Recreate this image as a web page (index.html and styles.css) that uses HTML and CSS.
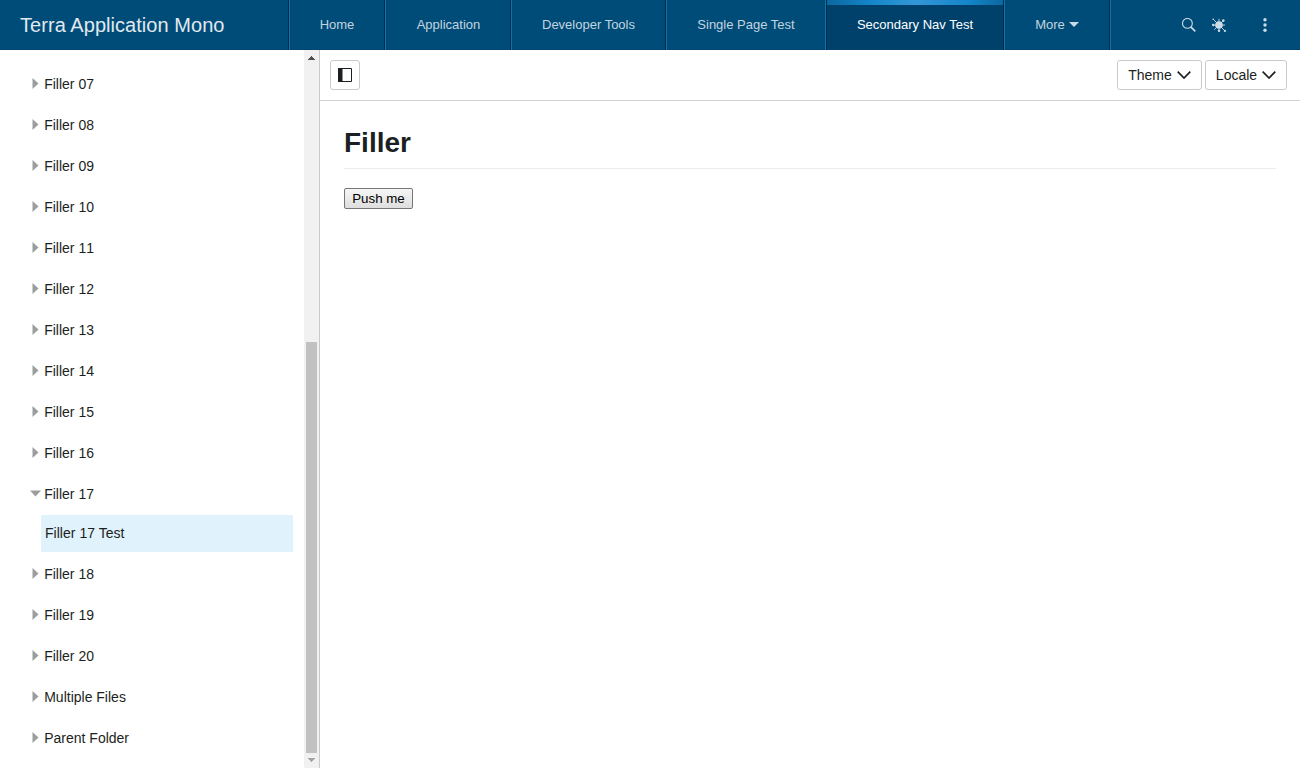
FILE: index.html
```html
<!DOCTYPE html>
<html lang="en">
<head>
<meta charset="utf-8">
<title>Terra Application Mono</title>
<link rel="stylesheet" href="styles.css">
</head>
<body>
<header class="header">
  <div class="brand">Terra Application Mono</div>
  <nav class="tabs">
    <a class="tab home">Home</a>
    <a class="tab application">Application</a>
    <a class="tab developer">Developer Tools</a>
    <a class="tab single">Single Page Test</a>
    <a class="tab active">Secondary Nav Test</a>
    <a class="tab more">More<svg width="10" height="5" viewBox="0 0 10 5"><path d="M0 0h10L5 5z"/></svg></a>
  </nav>
  <div class="utilities">
    <svg class="search" width="14" height="14" viewBox="0 0 14 14"><circle cx="5.4" cy="5.4" r="4.9" fill="none" stroke="currentColor" stroke-width="1.1"/><path d="M8.8 8.8l4.5 4.5" stroke="currentColor" stroke-width="1.7"/></svg>
    <svg class="bug" width="14" height="14" viewBox="0 0 14 14"><circle cx="7" cy="7" r="3.8" fill="currentColor"/><path d="M7 .8v12.5M.8 7H13M1 1l12 12M11.5 2.5L2.3 11.7" stroke="currentColor" stroke-width=".9"/><g fill="currentColor"><circle cx="1.2" cy="7" r="1.2"/><circle cx="11.3" cy="2.6" r="1.3"/><circle cx="1.2" cy="1.2" r=".8"/><circle cx="12.9" cy="12.9" r="1.1"/><circle cx="7" cy="12.8" r="1.2"/></g></svg>
    <svg class="dots" width="4" height="14" viewBox="0 0 4 14" fill="currentColor"><circle cx="2" cy="1.8" r="1.7"/><circle cx="2" cy="7" r="1.7"/><circle cx="2" cy="12.2" r="1.7"/></svg>
  </div>
</header>
<div class="body">
  <aside class="sidebar">
    <ul class="menu">
      <li class="item"><i class="arrow"></i>Filler 07</li>
      <li class="item"><i class="arrow"></i>Filler 08</li>
      <li class="item"><i class="arrow"></i>Filler 09</li>
      <li class="item"><i class="arrow"></i>Filler 10</li>
      <li class="item"><i class="arrow"></i>Filler 11</li>
      <li class="item"><i class="arrow"></i>Filler 12</li>
      <li class="item"><i class="arrow"></i>Filler 13</li>
      <li class="item"><i class="arrow"></i>Filler 14</li>
      <li class="item"><i class="arrow"></i>Filler 15</li>
      <li class="item"><i class="arrow"></i>Filler 16</li>
      <li class="item"><i class="arrow open"></i>Filler 17</li>
      <li class="child">Filler 17 Test</li>
      <li class="item"><i class="arrow"></i>Filler 18</li>
      <li class="item"><i class="arrow"></i>Filler 19</li>
      <li class="item"><i class="arrow"></i>Filler 20</li>
      <li class="item"><i class="arrow"></i>Multiple Files</li>
      <li class="item"><i class="arrow"></i>Parent Folder</li>
    </ul>
    <div class="scrollbar">
      <svg width="7" height="4" viewBox="0 0 7 4" fill="#505050" shape-rendering="crispEdges"><path d="M3 0h1v1h1v1h1v1h1v1H0V3h1V2h1V1h1z"/></svg>
      <div class="thumb"></div>
      <svg width="7" height="4" viewBox="0 0 7 4" fill="#a3a3a3" shape-rendering="crispEdges"><path d="M0 0h7v1H6v1H5v1H4v1H3V3H2V2H1V1H0z"/></svg>
    </div>
  </aside>
  <main class="main">
    <div class="toolbar">
      <button class="btn toggle"><svg width="14" height="14" viewBox="0 0 14 14"><path d="M0 0h4.5v14H0z" fill="#1c1f21"/><path d="M4 .5h9.5v13H4" fill="none" stroke="#1c1f21"/></svg></button>
      <button class="btn theme">Theme<svg width="14" height="8" viewBox="0 0 14 8"><path d="M.7.7L7 7 13.3.7" fill="none" stroke="#1c1f21" stroke-width="1.7"/></svg></button>
      <button class="btn locale">Locale<svg width="14" height="8" viewBox="0 0 14 8"><path d="M.7.7L7 7 13.3.7" fill="none" stroke="#1c1f21" stroke-width="1.7"/></svg></button>
    </div>
    <section class="content">
      <h1>Filler</h1>
      <button class="push">Push me</button>
    </section>
  </main>
</div>
</body>
</html>
```
FILE: styles.css
```css
* { box-sizing: border-box; }
body {
  margin: 0;
  height: 768px;
  overflow: hidden;
  display: flex;
  flex-direction: column;
  font: 14px "Liberation Sans", Arial, sans-serif;
  color: #1c1f21;
  background: #fff;
}
svg { display: block; flex: none; }
.header {
  flex: none;
  height: 50px;
  display: flex;
  background: #004c79;
  box-shadow: inset 0 -1px #00446f;
  color: #ccdbe5;
}
.brand {
  width: 288px;
  padding-left: 20px;
  font-size: 20px;
  line-height: 50px;
  letter-spacing: .05px;
  color: #e0e9ef;
}
.tabs {
  display: flex;
  border-left: 1px solid #002d49;
  font-size: 13px;
}
.tab {
  display: flex;
  align-items: center;
  justify-content: center;
  padding-bottom: 2px;
  border-left: 1px solid #1370a8;
  border-right: 1px solid #002d49;
  color: #c2d4df;
  white-space: nowrap;
}
.home { width: 96px; }
.application { width: 126px; padding-left: 1px; }
.developer { width: 155px; }
.single {
  width: 160px;
  border-right-color: #1370a8;
}
.active {
  width: 178px;
  border-left-color: #002d49;
  background: linear-gradient(90deg, #0c68a0, #1486ca 25%, #3496d6 50%, #1486ca 80%, #0c68a0) top / 100% 5px no-repeat, #00416b;
  color: #fff;
}
.more {
  width: 106px;
  gap: 4px;
}
.more svg {
  margin-top: 1px;
  fill: #ccdbe5;
}
.tabs::after {
  content: "";
  border-right: 1px solid #1370a8;
}
.utilities {
  display: flex;
  align-items: center;
  margin-left: auto;
  padding-right: 33px;
}
.bug { margin: 0 37px 0 16px; }
.body {
  flex: 1;
  min-height: 0;
  display: flex;
}
.sidebar {
  flex: none;
  width: 320px;
  display: flex;
  border-right: 1px solid #c8cacb;
}
.menu {
  flex: 1;
  margin: 0;
  padding: 14px 11px 0 30px;
  list-style: none;
}
.item {
  display: flex;
  align-items: center;
  height: 41px;
  padding-bottom: 2px;
  font-kerning: none;
}
.arrow {
  width: 11px;
  height: 11px;
  margin-right: 3.2px;
  background: #9b9d9e;
  clip-path: polygon(2.5px 0, 8.5px 5.5px, 2.5px 11px);
}
.open { clip-path: polygon(0 2.5px, 11px 2.5px, 5.5px 8.5px); }
.child {
  height: 37px;
  margin: 0 0 2px 11px;
  padding-left: 4px;
  line-height: 37px;
  letter-spacing: .03px;
  background: #e0f2fc;
}
.scrollbar {
  width: 15px;
  display: flex;
  flex-direction: column;
  align-items: center;
  padding: 6px 0;
  background: #f1f1f1;
}
.thumb {
  width: 11px;
  height: 411px;
  margin: auto 0 5px;
  background: #c1c1c1;
}
.main { flex: 1; }
.toolbar {
  display: flex;
  align-items: center;
  height: 51px;
  padding: 0 13px 0 10px;
  border-bottom: 1px solid #d0d2d3;
}
.btn {
  display: flex;
  align-items: center;
  justify-content: center;
  gap: 5px;
  height: 30px;
  padding: 0;
  border: 1px solid #c8cacb;
  border-radius: 3px;
  background: #fff;
  font: inherit;
  color: inherit;
}
.toggle { width: 30px; }
.theme {
  width: 85px;
  margin: 0 3px 0 auto;
}
.locale { width: 82px; }
.content { padding: 24px 24px 0; }
h1 {
  height: 44px;
  margin: 0 0 19px;
  border-bottom: 1px solid #eaecef;
  font-size: 28px;
  line-height: 35px;
}
.push {
  display: block;
  width: 69px;
  height: 21px;
  padding: 0;
  border: 1px solid #767676;
  border-radius: 2px;
  background: linear-gradient(#f6f6f6, #dedede);
  font: 13.333px "Liberation Sans", Arial, sans-serif;
  color: #000;
}
```
